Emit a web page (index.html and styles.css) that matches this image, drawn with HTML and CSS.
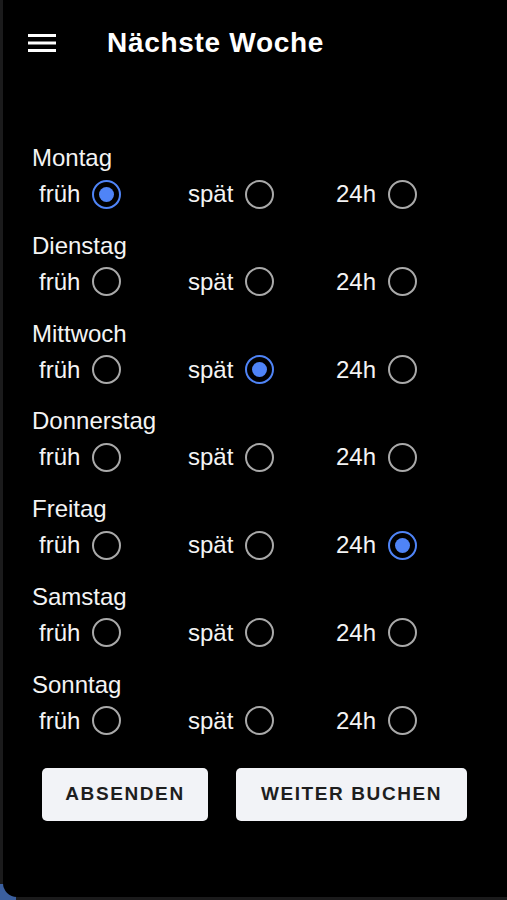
FILE: index.html
```html
<!DOCTYPE html>
<html lang="de">
<head>
  <meta charset="UTF-8">
  <title>Nächste Woche</title>
  <link rel="stylesheet" href="styles.css">
</head>
<body>

<div class="corner-glow"></div>

<div class="screen">
  <!-- Top bar -->
  <header class="topbar">
    <button class="menu-btn" type="button" aria-label="Menü">
      <svg width="28" height="20" viewBox="0 0 28 20">
        <rect x="0" y="1" width="28" height="3" fill="#fff"/>
        <rect x="0" y="8.5" width="28" height="3" fill="#fff"/>
        <rect x="0" y="16" width="28" height="3" fill="#fff"/>
      </svg>
    </button>
    <h1 class="title">Nächste Woche</h1>
  </header>

  <!-- Shift selection per day -->
  <form class="week-form">
    <div class="day">
      <div class="day-name">Montag</div>
      <div class="shifts">
        <label class="shift">früh <input type="radio" name="mo" checked></label>
        <label class="shift">spät <input type="radio" name="mo"></label>
        <label class="shift">24h <input type="radio" name="mo"></label>
      </div>
    </div>

    <div class="day">
      <div class="day-name">Dienstag</div>
      <div class="shifts">
        <label class="shift">früh <input type="radio" name="di"></label>
        <label class="shift">spät <input type="radio" name="di"></label>
        <label class="shift">24h <input type="radio" name="di"></label>
      </div>
    </div>

    <div class="day">
      <div class="day-name">Mittwoch</div>
      <div class="shifts">
        <label class="shift">früh <input type="radio" name="mi"></label>
        <label class="shift">spät <input type="radio" name="mi" checked></label>
        <label class="shift">24h <input type="radio" name="mi"></label>
      </div>
    </div>

    <div class="day">
      <div class="day-name">Donnerstag</div>
      <div class="shifts">
        <label class="shift">früh <input type="radio" name="do"></label>
        <label class="shift">spät <input type="radio" name="do"></label>
        <label class="shift">24h <input type="radio" name="do"></label>
      </div>
    </div>

    <div class="day">
      <div class="day-name">Freitag</div>
      <div class="shifts">
        <label class="shift">früh <input type="radio" name="fr"></label>
        <label class="shift">spät <input type="radio" name="fr"></label>
        <label class="shift">24h <input type="radio" name="fr" checked></label>
      </div>
    </div>

    <div class="day">
      <div class="day-name">Samstag</div>
      <div class="shifts">
        <label class="shift">früh <input type="radio" name="sa"></label>
        <label class="shift">spät <input type="radio" name="sa"></label>
        <label class="shift">24h <input type="radio" name="sa"></label>
      </div>
    </div>

    <div class="day">
      <div class="day-name">Sonntag</div>
      <div class="shifts">
        <label class="shift">früh <input type="radio" name="so"></label>
        <label class="shift">spät <input type="radio" name="so"></label>
        <label class="shift">24h <input type="radio" name="so"></label>
      </div>
    </div>

    <div class="actions">
      <button class="btn btn-send" type="button">Absenden</button>
      <button class="btn btn-more" type="button">Weiter buchen</button>
    </div>
  </form>
</div>

</body>
</html>
```

FILE: styles.css
```css
/* Reset */
* {
  box-sizing: border-box;
  margin: 0;
  padding: 0;
}
html, body {
  height: 100%;
  background: #1b1b1c;
  font-family: 'Liberation Sans', Arial, sans-serif;
  color: #f4f4f4;
  overflow: hidden;
}

/* blue bit peeking out behind the rounded corner */
.corner-glow {
  position: absolute;
  left: 0;
  bottom: 0;
  width: 16px;
  height: 16px;
  background: #3b5f9e;
}

/* Main black panel */
.screen {
  position: relative;
  margin-left: 3px;
  height: 897px;
  background: #000;
  border-bottom-left-radius: 14px;
}

/* Header */
.topbar {
  display: flex;
  align-items: center;
  height: 86px;
  padding-left: 25px;
}
.menu-btn {
  display: flex;
  background: none;
  border: none;
  cursor: pointer;
}
.title {
  margin-left: 51px;
  font-size: 28px;
  font-weight: 700;
  letter-spacing: 0.7px;
  color: #fff;
}

/* Days */
.week-form {
  padding: 58px 0 0 29px;
}
.day {
  margin-bottom: 22.8px;
}
.day-name {
  font-size: 24px;
  line-height: 28px;
  height: 28px;
}
.shifts {
  display: grid;
  grid-template-columns: 149px 148px auto;
  margin-top: 7px;
  padding-left: 7px;
  height: 30px;
}
.shift {
  display: flex;
  align-items: center;
  gap: 12px;
  font-size: 24px;
  cursor: pointer;
}

/* Radio buttons */
.shift input[type="radio"] {
  appearance: none;
  -webkit-appearance: none;
  width: 29px;
  height: 29px;
  border: 2.5px solid #a9a9a9;
  border-radius: 50%;
  display: grid;
  place-items: center;
  margin: 0;
  cursor: pointer;
}
.shift input[type="radio"]:checked {
  border-color: #4f84f7;
}
.shift input[type="radio"]:checked::after {
  content: "";
  width: 15px;
  height: 15px;
  border-radius: 50%;
  background: #4f84f7;
}

/* Buttons */
.actions {
  display: flex;
  gap: 28px;
  margin-top: 32px;
  padding-left: 10px;
}
.btn {
  height: 53px;
  background: #f2f3f7;
  color: #1e1e1e;
  border: none;
  border-radius: 5px;
  font-family: 'Liberation Sans', Arial, sans-serif;
  font-size: 19px;
  font-weight: 700;
  letter-spacing: 1.6px;
  text-transform: uppercase;
  cursor: pointer;
}
.btn-send {
  width: 166px;
}
.btn-more {
  width: 231px;
}
```
